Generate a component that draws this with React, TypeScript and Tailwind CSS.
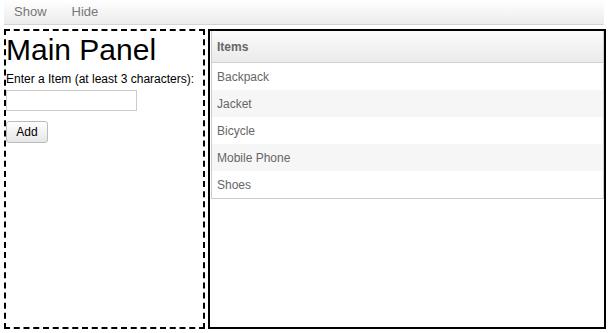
const ITEMS = ["Backpack", "Jacket", "Bicycle", "Mobile Phone", "Shoes"];

export default function App() {
  return (
    <div className="h-[333px] w-[612px] bg-white font-['Liberation_Sans',Arial,sans-serif]">
      <nav className="ml-[4px] flex h-[25px] w-[600px] items-center border-b border-[#d4d4d4] bg-gradient-to-b from-white to-[#ececec] text-[13px] text-[#777]">
        <span className="ml-[10px]">Show</span>
        <span className="ml-[25px]">Hide</span>
      </nav>

      <div className="ml-[4px] mt-[4px] flex h-[300px] gap-[3px]">
        <MainPanel />
        <ItemsPanel />
      </div>
    </div>
  );
}

function MainPanel() {
  return (
    <div className="w-[201px] border-2 border-dashed border-black pt-[2px]">
      <h1 className="text-[30px] leading-[34px] text-black">Main Panel</h1>
      <label className="mt-[5px] block text-[12px] leading-[14px] text-black">
        Enter a Item (at least 3 characters):
      </label>
      <input
        type="text"
        className="mt-[4px] block h-[21px] w-[131px] border border-[#ccc] bg-white"
      />
      <button className="mt-[10px] h-[22px] w-[42px] rounded-[3px] border border-[#bbb] bg-gradient-to-b from-white to-[#e6e6e6] text-[12px] text-black">
        Add
      </button>
    </div>
  );
}

function ItemsPanel() {
  return (
    <div className="w-[398px] border-2 border-black pl-[1px]">
      <div className="border border-t-0 border-[#ccc]">
        <div className="flex h-[32px] items-center border-b border-[#d0d0d0] bg-gradient-to-b from-[#fafafa] to-[#ebebeb] pl-[5px] text-[12px] font-bold text-[#666]">
          Items
        </div>
        {ITEMS.map((item, i) => (
          <div
            key={item}
            className={`flex h-[27px] items-center pl-[5px] text-[12px] text-[#666] ${
              i % 2 === 1 ? "bg-[#f6f6f6]" : "bg-white"
            }`}
          >
            {item}
          </div>
        ))}
      </div>
    </div>
  );
}
